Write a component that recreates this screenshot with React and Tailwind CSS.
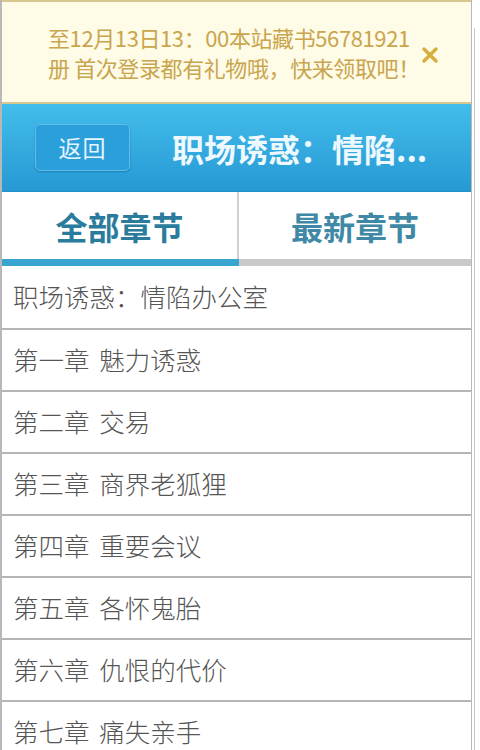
import React from "react";

const chapters = [
  "职场诱惑：情陷办公室",
  "第一章 魅力诱惑",
  "第二章 交易",
  "第三章 商界老狐狸",
  "第四章 重要会议",
  "第五章 各怀鬼胎",
  "第六章 仇恨的代价",
  "第七章 痛失亲手",
];

const font = { fontFamily: '"Noto Sans CJK SC", "Noto Sans", sans-serif' };

function Notice() {
  return (
    <div className="h-[104px] shrink-0 flex items-start bg-[#fefbe7] border-t-2 border-b-2 border-[#d8c78f]">
      <p className="pl-[46px] pt-[20px] text-[22px] leading-[30px] text-[#c9a54e] tracking-[-0.4px]">
        至12月13日13：00本站藏书56781921
        <br />
        册 首次登录都有礼物哦，快来领取吧！
      </p>
      <svg width="18" height="18" viewBox="0 0 18 18" className="ml-auto mr-[32px] mt-[44px]">
        <path d="M3 3 L15 15 M15 3 L3 15" stroke="#d6ae3e" strokeWidth="3.4" strokeLinecap="round" />
      </svg>
    </div>
  );
}

function Header() {
  return (
    <div className="h-[88px] shrink-0 flex items-center bg-gradient-to-b from-[#43bdeb] to-[#2699d4] border-b border-[#2590c8]">
      <button className="ml-[33px] w-[95px] h-[47px] rounded-[5px] bg-[#2b9fd9] border border-[#5bbfe9] shadow-[0_1px_2px_rgba(0,60,110,0.35)] text-[23px] text-[#e4f5ff] tracking-[1px]">
        返回
      </button>
      <h1 className="ml-[42px] text-[32px] font-bold text-[#eef9ff] truncate">职场诱惑：情陷...</h1>
    </div>
  );
}

function Tabs() {
  return (
    <div className="shrink-0">
      <div className="flex h-[67px]">
        <div className="w-[237px] flex items-center justify-center text-[32px] font-bold text-[#2b7c9c] border-r-2 border-[#d0d0d0]">
          全部章节
        </div>
        <div className="flex-1 flex items-center justify-center text-[32px] font-bold text-[#3f89a6]">
          最新章节
        </div>
      </div>
      <div className="flex h-[7px]">
        <div className="w-[237px] bg-[#38a5d1]" />
        <div className="flex-1 bg-[#c9c9c9]" />
      </div>
    </div>
  );
}

export default function App() {
  return (
    <div className="w-[480px] h-[750px] flex bg-white overflow-hidden" style={font}>
      <div className="w-[472px] shrink-0 flex flex-col border-l-2 border-r border-[#b8b8b8]">
        <Notice />
        <Header />
        <Tabs />
        <ul className="flex flex-col">
          {chapters.map((c, i) => (
            <li
              key={i}
              className={`h-[62px] shrink-0 flex items-center pl-[11px] pb-[2px] text-[25.5px] font-light text-[#555] [word-spacing:4px] ${
                i === 0 ? "h-[61px]" : "border-t-2 border-[#b5b5b5]"
              }`}
            >
              {c}
            </li>
          ))}
        </ul>
      </div>
      <div className="flex-1 flex flex-col">
        <div className="h-[28px]" />
        <div className="flex-1 ml-[2px] border-l border-[#c8c8c8]" />
      </div>
    </div>
  );
}
